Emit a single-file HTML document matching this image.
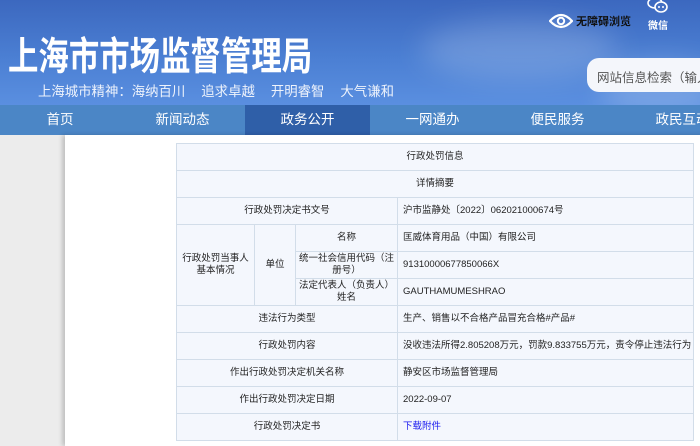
<!DOCTYPE html>
<html><head><meta charset="utf-8"><style>
*{margin:0;padding:0;box-sizing:border-box}
body{width:700px;height:446px;overflow:hidden;font-family:"Liberation Sans","Noto Sans CJK SC",sans-serif;background:#ececec;position:relative}
.hdr{position:absolute;left:0;top:0;width:700px;height:105px;background:linear-gradient(180deg,#3c68bf 0%,#4b7fd3 55%,#5a8fe0 100%);overflow:hidden}
.cloud{position:absolute;border-radius:50%;background:rgba(255,255,255,.18);filter:blur(14px)}
.title{position:absolute;left:8px;top:26px;font-size:39px;font-weight:bold;color:#fff;white-space:nowrap;transform:scaleX(.78);transform-origin:0 0}
.sub{position:absolute;left:38px;top:80px;font-size:13.4px;color:#eef3fc;white-space:nowrap}
.sub span{margin-right:16px}
.acc{position:absolute;left:549px;top:12px;color:#111;font-size:11px;font-weight:bold;display:flex;align-items:center}
.wx{position:absolute;left:646px;top:0;color:#fff;font-size:10px;font-weight:bold;text-align:center}
.search{position:absolute;left:587px;top:58px;width:140px;height:34px;background:#f4f6fb;border-radius:12px;font-size:12.5px;color:#555;padding:9px 0 0 10px;white-space:nowrap}
.nav{position:absolute;left:0;top:105px;width:700px;height:30px;background:#4b86c6;display:flex}
.nav div{width:125px;flex:none;text-align:center;color:#fff;font-size:13.5px;line-height:30px}
.nav div.on{background:#2f5fa8}
.nav div:first-child{width:120px}
.page{position:absolute;left:65px;top:135px;width:640px;height:311px;background:#fff;box-shadow:-3px 0 4px rgba(0,0,0,.18)}
table{position:absolute;left:176px;top:143px;width:518px;border-collapse:collapse;font-size:9.5px;color:#222;table-layout:fixed}
td{border:1.5px solid #d2dde9;background:#f4f7fd;text-align:center;height:27px;padding:0 2px;line-height:12px}
td.v{text-align:left;padding-left:5px;white-space:nowrap;overflow:visible}
a{color:#1a1aee}
</style></head><body>
<div class="hdr">
<div class="cloud" style="left:420px;top:20px;width:200px;height:60px"></div>
<div class="cloud" style="left:600px;top:60px;width:120px;height:60px"></div>
<div class="title">上海市市场监督管理局</div>
<div class="sub"><span>上海城市精神：海纳百川</span><span>追求卓越</span><span>开明睿智</span><span>大气谦和</span></div>
<div class="acc"><svg width="24" height="18" viewBox="0 0 24 18"><path d="M1 9Q12 -3 23 9Q12 21 1 9Z" fill="none" stroke="#fff" stroke-width="2.2"/><circle cx="12" cy="9" r="3.2" fill="none" stroke="#fff" stroke-width="2"/></svg><span style="margin-left:3px">无障碍浏览</span></div>
<div class="wx"><svg width="24" height="14" viewBox="0 0 24 14"><ellipse cx="9" cy="3" rx="7" ry="5" fill="none" stroke="#fff" stroke-width="1.6"/><ellipse cx="15" cy="7" rx="6" ry="5" fill="#4470c4" stroke="#fff" stroke-width="1.6"/><circle cx="13" cy="7" r="1" fill="#fff"/><circle cx="17" cy="7" r="1" fill="#fff"/></svg><div>微信</div></div>
<div class="search">网站信息检索（输入</div>
</div>
<div class="nav"><div>首页</div><div>新闻动态</div><div class="on">政务公开</div><div>一网通办</div><div>便民服务</div><div>政民互动</div></div>
<div class="page"></div>
<table>
<colgroup><col style="width:78px"><col style="width:41px"><col style="width:102px"><col></colgroup>
<tr><td colspan="4">行政处罚信息</td></tr>
<tr><td colspan="4">详情摘要</td></tr>
<tr><td colspan="3">行政处罚决定书文号</td><td class="v">沪市监静处〔2022〕062021000674号</td></tr>
<tr><td rowspan="3">行政处罚当事人<br>基本情况</td><td rowspan="3">单位</td><td>名称</td><td class="v">匡威体育用品（中国）有限公司</td></tr>
<tr><td>统一社会信用代码（注册号）</td><td class="v">91310000677850066X</td></tr>
<tr><td>法定代表人（负责人）姓名</td><td class="v">GAUTHAMUMESHRAO</td></tr>
<tr><td colspan="3">违法行为类型</td><td class="v">生产、销售以不合格产品冒充合格#产品#</td></tr>
<tr><td colspan="3">行政处罚内容</td><td class="v">没收违法所得2.805208万元，罚款9.833755万元，责令停止违法行为</td></tr>
<tr><td colspan="3">作出行政处罚决定机关名称</td><td class="v">静安区市场监督管理局</td></tr>
<tr><td colspan="3">作出行政处罚决定日期</td><td class="v">2022-09-07</td></tr>
<tr><td colspan="3">行政处罚决定书</td><td class="v"><a>下载附件</a></td></tr>
</table>
</body></html>
